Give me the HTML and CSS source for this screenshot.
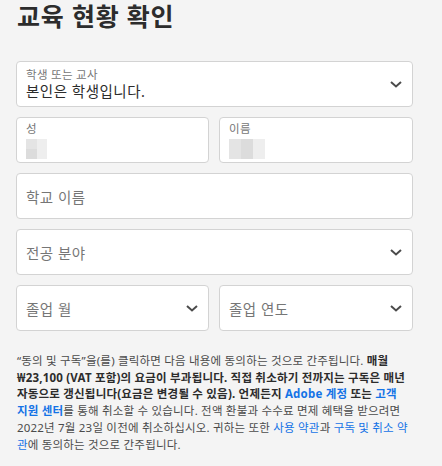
FILE: index.html
```html
<!DOCTYPE html>
<html lang="ko">
<head>
    <meta charset="UTF-8">
    <meta name="viewport" content="width=device-width, initial-scale=1.0">
    <title>교육 현황 확인</title>
    <link rel="stylesheet" href="styles.css">
</head>
<body>
    <div class="page">
        <h1 class="title">교육 현황 확인</h1>

        <form class="form">
            <div class="field select">
                <div class="field-text">
                    <span class="label">학생 또는 교사</span>
                    <span class="value">본인은 학생입니다.</span>
                </div>
                <svg class="chevron" width="12" height="7" viewBox="0 0 12 7"><polyline points="1,1 6,5.5 11,1" fill="none" stroke="#4b4b4b" stroke-width="2"/></svg>
            </div>

            <div class="row">
                <div class="field">
                    <div class="field-text">
                        <span class="label">성</span>
                        <div class="blur cols-2">
                            <i class="c2"></i><i class="c3"></i>
                            <i class="c1"></i><i class="c3"></i>
                        </div>
                    </div>
                </div>
                <div class="field">
                    <div class="field-text">
                        <span class="label">이름</span>
                        <div class="blur cols-3">
                            <i class="c2"></i><i class="c1"></i><i class="c3"></i>
                            <i class="c2"></i><i class="c1"></i><i class="c3"></i>
                        </div>
                    </div>
                </div>
            </div>

            <div class="field">
                <span class="placeholder">학교 이름</span>
            </div>

            <div class="field select">
                <span class="placeholder">전공 분야</span>
                <svg class="chevron" width="12" height="7" viewBox="0 0 12 7"><polyline points="1,1 6,5.5 11,1" fill="none" stroke="#4b4b4b" stroke-width="2"/></svg>
            </div>

            <div class="row">
                <div class="field select">
                    <span class="placeholder">졸업 월</span>
                    <svg class="chevron" width="12" height="7" viewBox="0 0 12 7"><polyline points="1,1 6,5.5 11,1" fill="none" stroke="#4b4b4b" stroke-width="2"/></svg>
                </div>
                <div class="field select">
                    <span class="placeholder">졸업 연도</span>
                    <svg class="chevron" width="12" height="7" viewBox="0 0 12 7"><polyline points="1,1 6,5.5 11,1" fill="none" stroke="#4b4b4b" stroke-width="2"/></svg>
                </div>
            </div>
        </form>

        <p class="terms">“동의 및 구독”을(를) 클릭하면 다음 내용에 동의하는 것으로 간주됩니다. <b>매월 ₩23,100 (VAT 포함)의 요금이 부과됩니다. 직접 취소하기 전까지는 구독은 매년 자동으로 갱신됩니다(요금은 변경될 수 있음). 언제든지 <a href="#">Adobe 계정</a> 또는 <a href="#">고객 지원 센터</a></b>를 통해 취소할 수 있습니다. 전액 환불과 수수료 면제 혜택을 받으려면 2022년 7월 23일 이전에 취소하십시오. 귀하는 또한 <a href="#">사용 약관</a>과 <a href="#">구독 및 취소 약관</a>에 동의하는 것으로 간주됩니다.</p>
    </div>
</body>
</html>
```

FILE: styles.css
```css
body {
    margin: 0;
    background-color: #f4f4f4;
    font-family: "Noto Sans", "Noto Sans CJK KR", sans-serif;
    color: #2c2c2c;
}

.page {
    width: 397px;
    padding: 0 16px;
}

.title {
    margin: 0 0 29px 1px;
    font-size: 25px;
    line-height: 32px;
    letter-spacing: 0.8px;
    font-weight: 700;
    color: #2c2c2c;
}

.form {
    display: flex;
    flex-direction: column;
    gap: 10px;
}

.row {
    display: grid;
    grid-template-columns: 193px 194px;
    gap: 10px;
}

.field {
    height: 46px;
    box-sizing: border-box;
    background: #fff;
    border: 1px solid #d3d3d3;
    border-radius: 4px;
    padding: 0 10px 0 9px;
    display: flex;
    align-items: center;
    justify-content: space-between;
}

.field-text {
    display: flex;
    flex-direction: column;
}

.label {
    font-size: 11.5px;
    line-height: 14px;
    letter-spacing: 0.3px;
    color: #767676;
}

.value {
    font-size: 14.5px;
    line-height: 18px;
    letter-spacing: 0.5px;
    color: #2c2c2c;
}

.placeholder {
    font-size: 14.5px;
    letter-spacing: 0.5px;
    color: #767676;
}

.chevron {
    display: block;
    flex: none;
}

.blur {
    display: grid;
    margin-top: 3px;
    grid-auto-rows: 10px;
}

.cols-2 {
    grid-template-columns: repeat(2, 10.5px);
}

.cols-3 {
    grid-template-columns: repeat(3, 12px);
}

.blur i {
    display: block;
}

.c1 { background: #dcdcdc; }
.c2 { background: #e4e4e4; }
.c3 { background: #eeeeee; }

.terms {
    margin: 22px 0 0 1px;
    font-size: 11.5px;
    line-height: 16.7px;
    letter-spacing: 0.2px;
    color: #4b4b4b;
}

.terms b {
    font-weight: 700;
    color: #2c2c2c;
    word-break: keep-all;
}

.terms a {
    color: #1473e6;
    text-decoration: none;
}
```
